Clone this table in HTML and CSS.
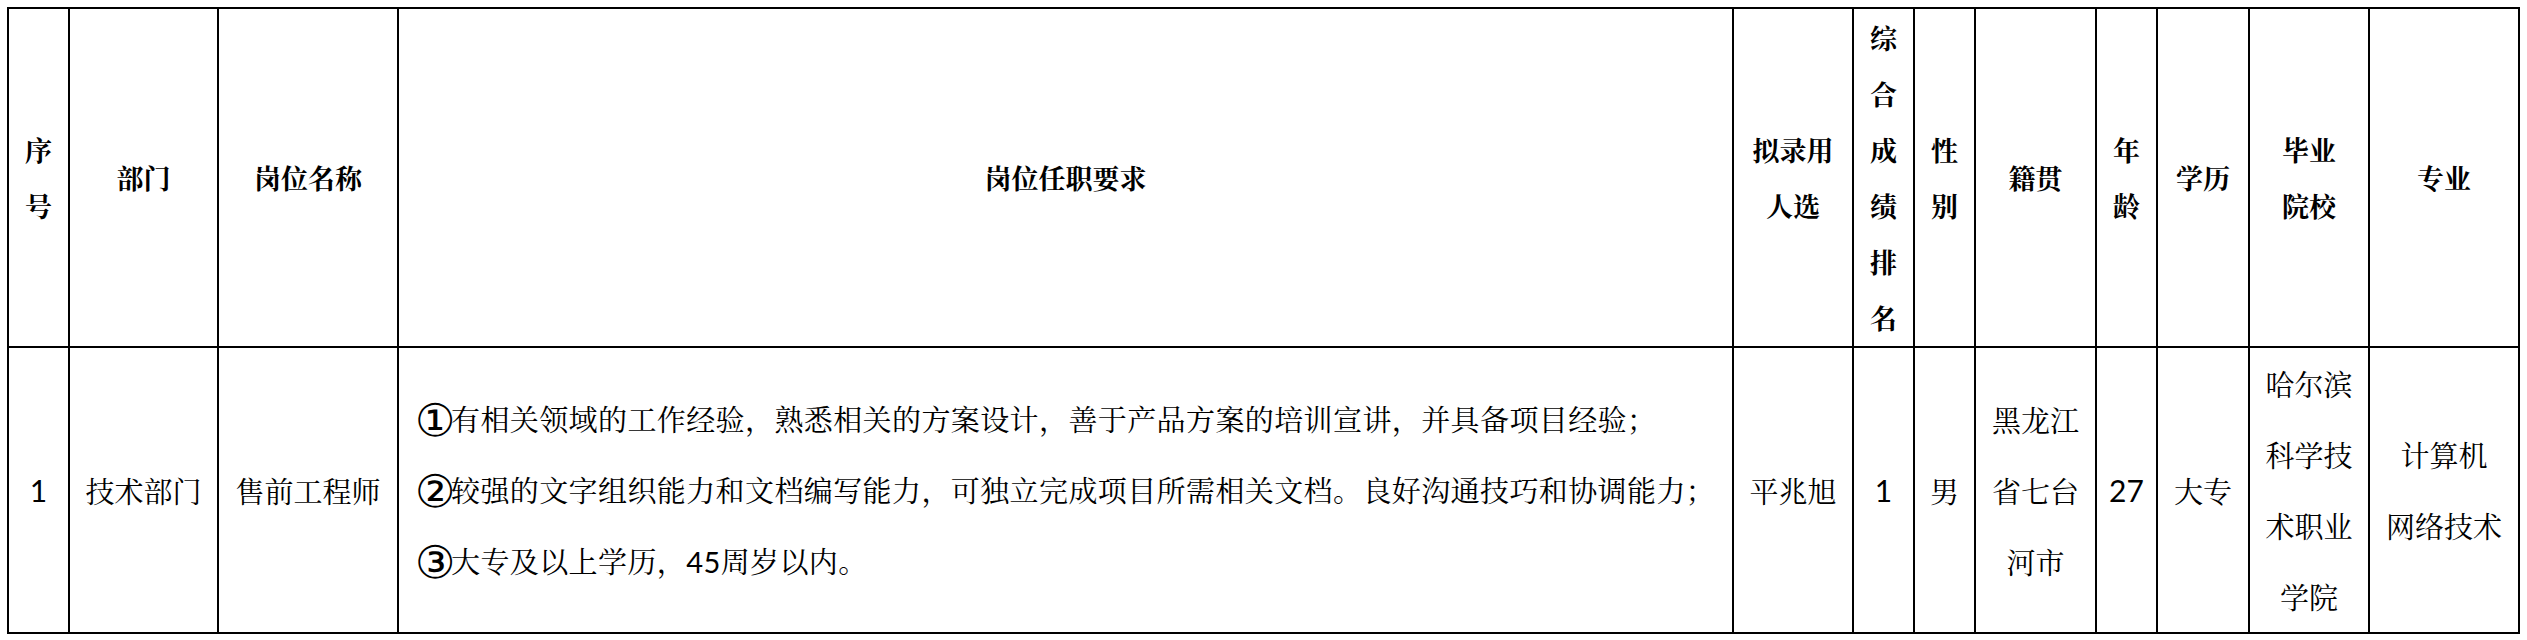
FILE: index.html
```html
<!DOCTYPE html>
<html lang="zh-CN">
<head>
<meta charset="utf-8">
<title>拟录用人员公示</title>
<link rel="stylesheet" href="styles.css">
</head>
<body>
<div class="page">
  <table class="roster">
    <colgroup>
      <col class="c-no"><col class="c-dept"><col class="c-post"><col class="c-req">
      <col class="c-name"><col class="c-rank"><col class="c-sex"><col class="c-origin">
      <col class="c-age"><col class="c-edu"><col class="c-school"><col class="c-major">
    </colgroup>
    <thead>
      <tr class="head-row">
        <th>序<br>号</th>
        <th>部门</th>
        <th>岗位名称</th>
        <th>岗位任职要求</th>
        <th>拟录用<br>人选</th>
        <th>综<br>合<br>成<br>绩<br>排<br>名</th>
        <th>性<br>别</th>
        <th>籍贯</th>
        <th>年<br>龄</th>
        <th>学历</th>
        <th>毕业<br>院校</th>
        <th>专业</th>
      </tr>
    </thead>
    <tbody>
      <tr class="body-row">
        <td class="num">1</td>
        <td>技术部门</td>
        <td>售前工程师</td>
        <td class="req"><span class="circ">①</span>有相关领域的工作经验，熟悉相关的方案设计，善于产品方案的培训宣讲，并具备项目经验；<br><span class="circ">②</span>较强的文字组织能力和文档编写能力，可独立完成项目所需相关文档。良好沟通技巧和协调能力；<br><span class="circ">③</span>大专及以上学历，<span class="num">45</span>周岁以内。</td>
        <td>平兆旭</td>
        <td class="num">1</td>
        <td>男</td>
        <td>黑龙江<br>省七台<br>河市</td>
        <td class="num">27</td>
        <td>大专</td>
        <td>哈尔滨<br>科学技<br>术职业<br>学院</td>
        <td>计算机<br>网络技术</td>
      </tr>
    </tbody>
  </table>
</div>
</body>
</html>
```

FILE: styles.css
```css
html, body {
  margin: 0;
  padding: 0;
  background: #ffffff;
}

.page {
  padding: 7px 0 0 7px;
}

.roster {
  border-collapse: collapse;
  table-layout: fixed;
  width: 2513px;
  font-family: "Noto Serif CJK SC", "Noto Sans CJK SC", serif;
  font-size: 27px;
  color: #000000;
}

.roster th,
.roster td {
  border: 2px solid #000000;
  padding: 0;
  text-align: center;
  vertical-align: middle;
  overflow: hidden;
}

.c-no { width: 61px; }
.c-dept { width: 149px; }
.c-post { width: 180px; }
.c-req { width: 1335px; }
.c-name { width: 120px; }
.c-rank { width: 61px; }
.c-sex { width: 61px; }
.c-origin { width: 121px; }
.c-age { width: 61px; }
.c-edu { width: 92px; }
.c-school { width: 120px; }
.c-major { width: 150px; }

.head-row {
  height: 339px;
}

.head-row th {
  font-weight: 700;
  line-height: 56px;
}

.body-row {
  height: 283px;
}

.body-row td {
  font-size: 29px;
  font-weight: 400;
  line-height: 71px;
}

.roster .req {
  text-align: left;
  padding-left: 16px;
  white-space: nowrap;
  letter-spacing: 0.4px;
}

.circ {
  font-family: "DejaVu Sans", "Noto Sans CJK SC", sans-serif;
  font-size: 45px;
  line-height: 1;
  display: inline-block;
  width: 36px;
  letter-spacing: 0;
  vertical-align: -5px;
}

.num {
  font-family: "Lato", "Noto Sans CJK SC", sans-serif;
}

.body-row td.num {
  font-size: 30px;
}
```
